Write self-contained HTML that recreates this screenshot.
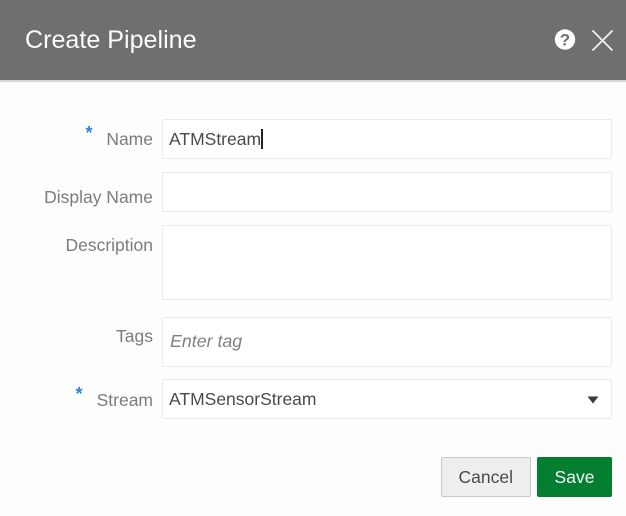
<!DOCTYPE html>
<html>
<head>
<meta charset="utf-8">
<style>
html,body{margin:0;padding:0;}
body{width:626px;height:516px;position:relative;overflow:hidden;background:#fdfdfd;font-family:"Liberation Sans",Arial,sans-serif;}
.a{position:absolute;white-space:nowrap;}
.wrap{position:absolute;left:0;top:0;width:626px;height:516px;filter:blur(.3px);}
.hdr{left:0;top:0;width:626px;height:80px;background:#6f6f6f;border-bottom:2px solid #d8d8d8;}
.title{left:25px;top:25px;font-size:25.1px;line-height:30px;color:#fbfbfb;}
.lbl{right:473px;font-size:17.5px;line-height:20px;color:#7c7c7c;}
.box{left:162px;width:450px;box-sizing:border-box;border:1.5px solid #ebebeb;border-radius:2px;background:#fff;}
.val{left:169px;font-size:17.5px;line-height:20px;color:#4a4a4a;}
.star{font-size:18px;line-height:22px;font-weight:700;color:#2a86d8;}
</style>
</head>
<body>
<div class="wrap">
<div class="a hdr"></div>
<div class="a title">Create Pipeline</div>
<svg class="a" style="left:554px;top:29px" width="22" height="22" viewBox="0 0 22 22">
<circle cx="11" cy="10.5" r="10.2" fill="#fff"/>
<text x="11" y="16.5" font-family="Liberation Sans" font-weight="700" font-size="17" text-anchor="middle" fill="#6f6f6f">?</text>
</svg>
<svg class="a" style="left:590px;top:28px" width="24" height="24" viewBox="0 0 24 24">
<path d="M2.5 2.5L22.5 22.5M22.5 2.5L2.5 22.5" stroke="#f2f2f2" stroke-width="1.8" fill="none"/>
</svg>

<div class="a star" style="left:85.5px;top:122px">*</div>
<div class="a lbl" style="top:129px">Name</div>
<div class="a box" style="top:119px;height:40px"></div>
<div class="a val" style="top:129px">ATMStream</div>
<div class="a" style="left:261px;top:129px;width:2px;height:20px;background:#222"></div>

<div class="a lbl" style="top:187px">Display Name</div>
<div class="a box" style="top:172px;height:40px"></div>

<div class="a lbl" style="top:235px">Description</div>
<div class="a box" style="top:225px;height:75px"></div>

<div class="a lbl" style="top:326px">Tags</div>
<div class="a box" style="top:317px;height:50px"></div>
<div class="a val" style="left:170px;top:331px;font-style:italic;color:#808080;font-size:17.8px">Enter tag</div>

<div class="a star" style="left:75.5px;top:383px">*</div>
<div class="a lbl" style="top:390px">Stream</div>
<div class="a box" style="top:379px;height:40px"></div>
<div class="a val" style="top:389px">ATMSensorStream</div>
<svg class="a" style="left:587px;top:396px" width="12" height="8" viewBox="0 0 12 8"><path d="M.5 .5H11.5L6 7.500Z" fill="#3a3a3a"/></svg>

<div class="a" style="left:440.500px;top:457px;width:90.500px;height:40px;box-sizing:border-box;background:#eeeeee;border:1.5px solid #c9c9c9;border-radius:2px;text-align:center;font-size:17.5px;line-height:38px;color:#4a4a4a">Cancel</div>
<div class="a" style="left:537px;top:457px;width:75px;height:40px;background:#047e31;border-radius:2px;text-align:center;font-size:17.5px;line-height:40px;color:#f6f6f6">Save</div>
</div>
</body>
</html>
